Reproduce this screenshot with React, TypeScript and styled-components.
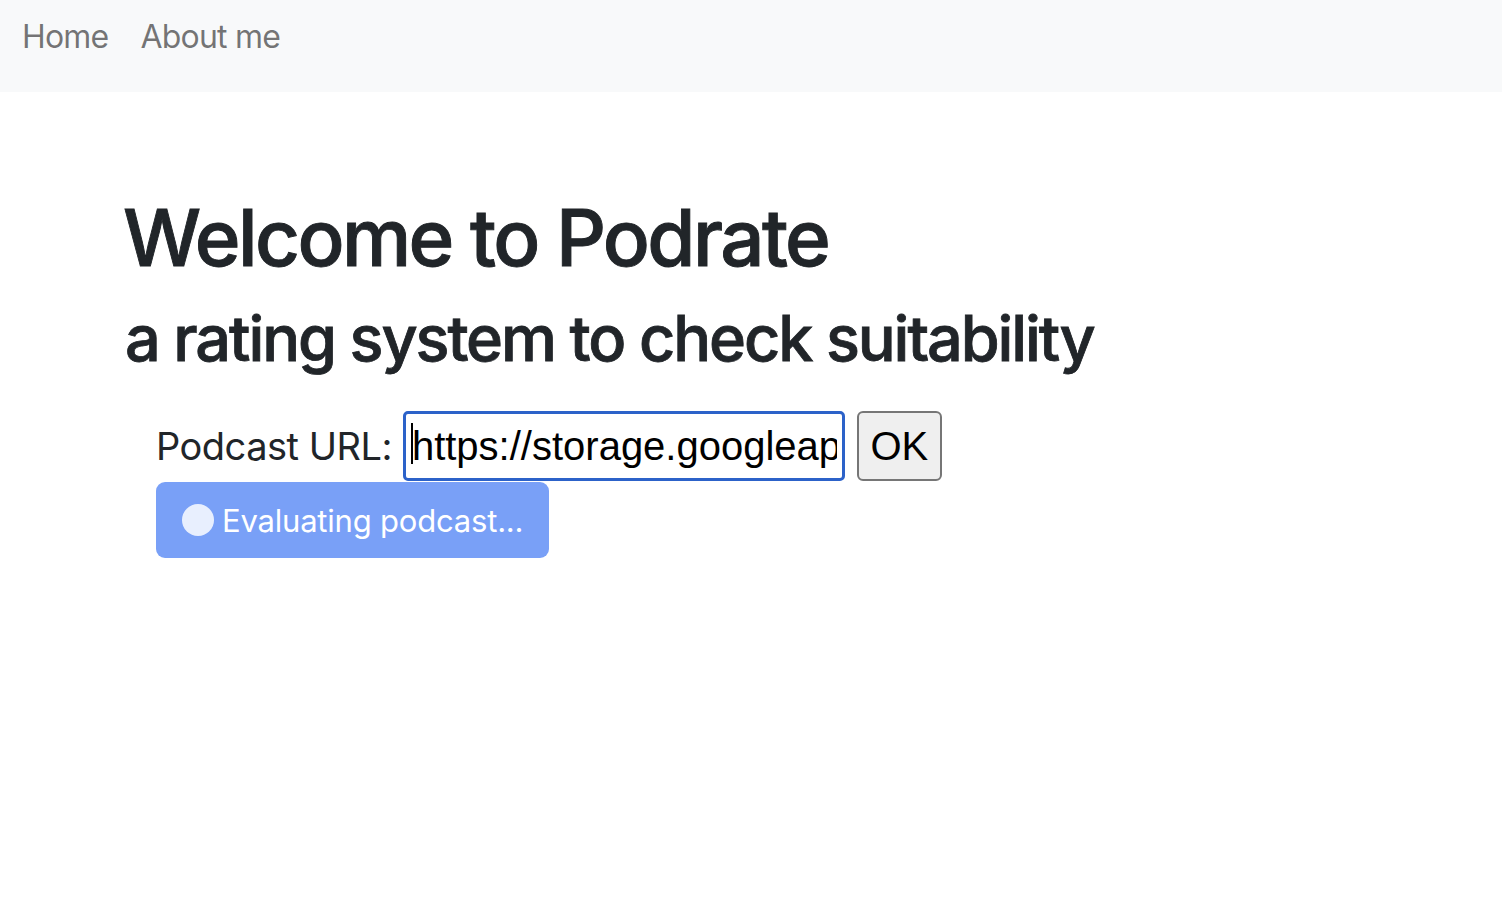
import React from "react";
import styled, { createGlobalStyle } from "styled-components";

const Global = createGlobalStyle`
  html, body { margin: 0; padding: 0; background: #ffffff; }
  body { font-family: Inter, "Noto Sans", sans-serif; color: #212529; }
  * { box-sizing: border-box; }
`;

const Navbar = styled.nav`
  height: 92px;
  background: #f8f9fa;
  display: flex;
  align-items: flex-start;
  padding: 13px 0 0 6px;
`;

const NavLink = styled.a`
  font-size: 32px;
  line-height: 48px;
  color: rgba(0, 0, 0, 0.55);
  text-decoration: none;
  padding: 0 16px;
  letter-spacing: -0.8px;
`;

const Main = styled.main`
  padding: 98px 0 0 125px;
`;

const Title = styled.h1`
  margin: 0 0 14px -2px;
  font-size: 78px;
  line-height: 96px;
  font-weight: 500;
  letter-spacing: -2.6px;
  -webkit-text-stroke: 0.9px #212529;
`;

const Subtitle = styled.h2`
  margin: 0 0 34px;
  font-size: 63px;
  line-height: 77px;
  font-weight: 500;
  letter-spacing: -2.1px;
  -webkit-text-stroke: 0.8px #212529;
`;

const Form = styled.form`
  padding-left: 31px;
  display: flex;
  flex-direction: column;
  align-items: flex-start;
  gap: 1px;
`;

const Row = styled.div`
  display: flex;
  align-items: center;
  height: 70px;
`;

const Label = styled.label`
  font-size: 38px;
  color: #212529;
  margin-right: 11px;
  letter-spacing: -0.5px;
`;

const InputWrap = styled.span`
  position: relative;
  display: inline-flex;
  &::before {
    content: "";
    position: absolute;
    left: 8px;
    top: 12px;
    width: 2px;
    height: 41px;
    background: #000;
  }
`;

const UrlInput = styled.input`
  width: 442px;
  height: 70px;
  border: 3px solid #2c62c9;
  border-radius: 5px;
  padding: 0 5px 0 6px;
  font-family: "Liberation Sans", Arial, sans-serif;
  font-size: 40px;
  color: #000;
  background: #fff;
  outline: none;
`;

const OkButton = styled.button`
  margin-left: 12px;
  height: 70px;
  width: 85px;
  padding: 0;
  border: 2px solid #767676;
  border-radius: 6px;
  background: #efefef;
  font-family: "Liberation Sans", Arial, sans-serif;
  font-size: 40px;
  color: #000;
`;

const LoadingButton = styled.button`
  display: inline-flex;
  align-items: center;
  gap: 8px;
  height: 76px;
  padding: 0 26px 0 26px;
  border: none;
  border-radius: 9px;
  background: #79a0f7;
  color: #ffffff;
  font-family: Inter, "Noto Sans", sans-serif;
  font-size: 31px;
  letter-spacing: -0.2px;
`;

const Spinner = styled.span`
  display: inline-block;
  width: 32px;
  height: 32px;
  border-radius: 50%;
  background: #e8effe;
`;

export default function App() {
  return (
    <>
      <Global />
      <Navbar>
        <NavLink href="#">Home</NavLink>
        <NavLink href="#">About me</NavLink>
      </Navbar>
      <Main>
        <Title>Welcome to Podrate</Title>
        <Subtitle>a rating system to check suitability</Subtitle>
        <Form onSubmit={(e) => e.preventDefault()}>
          <Row>
            <Label htmlFor="url">Podcast URL:</Label>
            <InputWrap>
              <UrlInput id="url" type="text" defaultValue="https://storage.googleapis.com/podcast.mp3" />
            </InputWrap>
            <OkButton type="submit">OK</OkButton>
          </Row>
          <LoadingButton type="button" disabled>
            <Spinner />
            Evaluating podcast...
          </LoadingButton>
        </Form>
      </Main>
    </>
  );
}
